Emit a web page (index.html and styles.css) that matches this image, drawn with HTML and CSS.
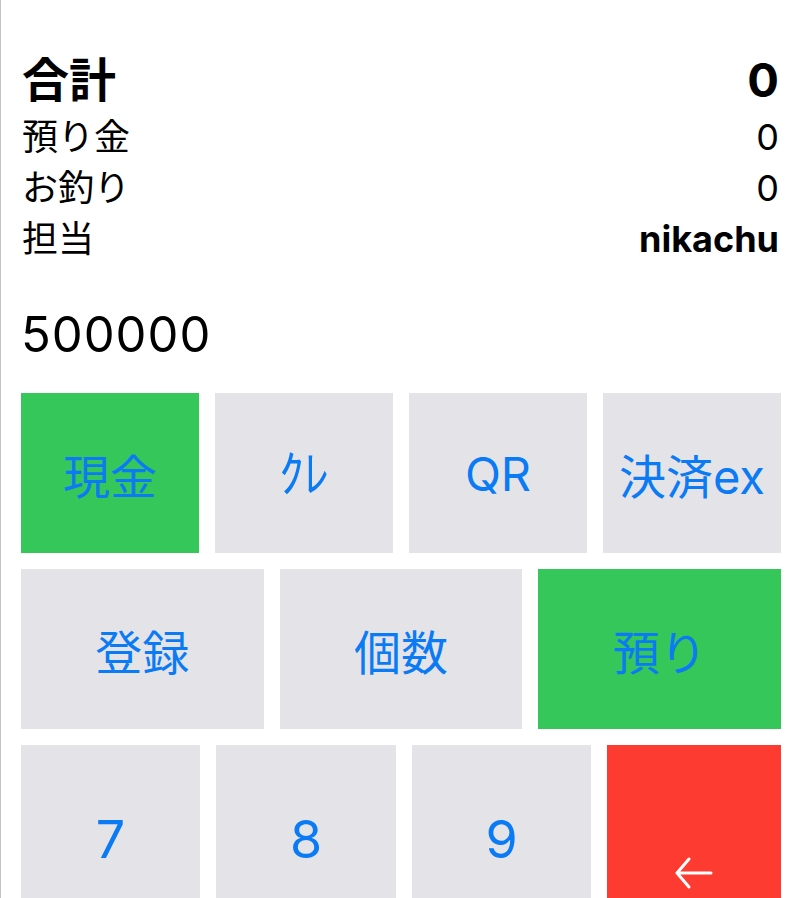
FILE: index.html
```html
<!DOCTYPE html>
<html lang="ja">
<head>
<meta charset="utf-8">
<title>Register</title>
<link rel="stylesheet" href="styles.css">
</head>
<body>
<div class="app">
  <div class="summary">
    <div class="row total"><span class="label">合計</span><span class="value">0</span></div>
    <div class="row"><span class="label">預り金</span><span class="value">0</span></div>
    <div class="row"><span class="label">お釣り</span><span class="value">0</span></div>
    <div class="row"><span class="label">担当</span><span class="value strong">nikachu</span></div>
  </div>
  <div class="entry">500000</div>
  <div class="pad">
    <div class="keys four">
      <button class="key green">現金</button>
      <button class="key kana">ｸﾚ</button>
      <button class="key">QR</button>
      <button class="key">決済ex</button>
    </div>
    <div class="keys three">
      <button class="key">登録</button>
      <button class="key">個数</button>
      <button class="key green">預り</button>
    </div>
    <div class="keys digits">
      <button class="key num">7</button>
      <button class="key num">8</button>
      <button class="key num">9</button>
      <button class="key red"><svg class="arrow" width="40" height="34" viewBox="0 0 40 34"><path d="M37 17H3M3 17L15 3M3 17L15 31" fill="none" stroke="#fff" stroke-width="3" stroke-linecap="round" stroke-linejoin="round"/></svg></button>
    </div>
  </div>
</div>
</body>
</html>
```
FILE: styles.css
```css
html, body {
  margin: 0;
  padding: 0;
  background: #fff;
  height: 100%;
  overflow: hidden;
}
body {
  font-family: Inter, "Noto Sans CJK JP", sans-serif;
  color: #000;
}
.app {
  border-left: 1px solid #c4c4c4;
  padding: 48px 20px 0 20px;
  min-height: 100%;
  box-sizing: border-box;
}
.summary {
  display: flex;
  flex-direction: column;
}
.row {
  display: flex;
  justify-content: space-between;
  align-items: center;
  font-size: 36px;
  line-height: 51px;
  padding: 0 2px 0 1px;
}
.row.total {
  font-size: 47px;
  line-height: 64px;
  font-weight: 700;
}
.strong {
  font-weight: 700;
}
.entry {
  margin-top: 40px;
  font-size: 49px;
  line-height: 60px;
  letter-spacing: 1px;
  padding-left: 0;
}
.pad {
  margin-top: 28px;
  display: flex;
  flex-direction: column;
  gap: 16px;
}
.keys {
  display: grid;
  gap: 16px;
  height: 160px;
}
.keys.four {
  grid-template-columns: repeat(4, 1fr);
}
.keys.three {
  grid-template-columns: repeat(3, 1fr);
}
.keys.digits {
  grid-template-columns: 179fr 180fr 179fr 174fr;
  height: 188px;
}
.key {
  border: 0;
  margin: 0;
  padding: 0;
  border-radius: 0;
  background: #e4e4e8;
  color: #0a7bf5;
  font-family: Inter, "Noto Sans CJK JP", sans-serif;
  font-size: 47px;
  display: flex;
  align-items: center;
  justify-content: center;
}
.key.kana {
  font-size: 50px;
  padding-bottom: 6px;
}
.key.num {
  font-size: 52px;
}
.key.green {
  background: #35c759;
}
.key.red {
  background: #fe3b30;
}
.arrow {
  margin-top: 68px;
}
```
